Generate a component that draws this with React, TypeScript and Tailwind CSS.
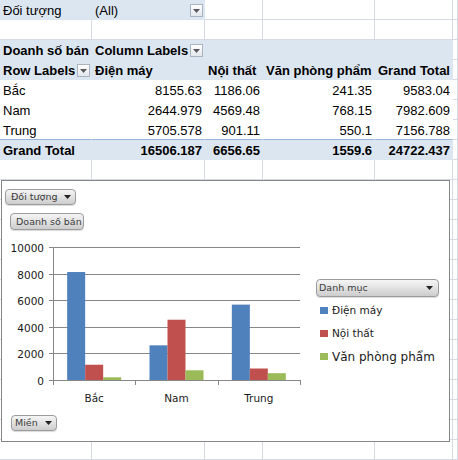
import React from "react";

const COLS = ["w-[92px]", "w-[113px]", "w-[58px]", "w-[112px]", "w-[78px]", "w-[5px]"];

type Kind = "grid" | "fill" | "plain" | "plainLine" | "total";

const KIND: Record<Kind, string> = {
  grid: "border-r border-b border-[#d5dae3] bg-white",
  fill: "border-r border-b border-[#dce6f1] bg-[#dce6f1]",
  plain: "border-r border-b border-white bg-white",
  plainLine: "border-r border-b border-r-white border-b-[#95b3d7] bg-white",
  total: "border-r border-b border-[#dce6f1] bg-[#dce6f1]",
};

type Cell = { k: Kind; t?: string; b?: boolean; r?: boolean; dd?: boolean };

const g: Cell = { k: "grid" };

function DropBtn() {
  return (
    <span className="ml-auto mb-[2px] mr-[1px] flex h-[13px] w-[13px] shrink-0 items-center justify-center border border-[#aab4c0] bg-linear-to-b from-white to-[#e3e8ee]">
      <svg width="7" height="4" viewBox="0 0 7 4">
        <path d="M0 0 L7 0 L3.5 4 Z" fill="#5a5a5a" />
      </svg>
    </span>
  );
}

const rows: Cell[][] = [
  [{ k: "fill", t: "Đối tượng" }, { k: "fill", t: "(All)", dd: true }, g, g, g, g],
  [g, g, g, g, g, g],
  [
    { k: "fill", t: "Doanh số bán", b: true },
    { k: "fill", t: "Column Labels", b: true, dd: true },
    { k: "fill" },
    { k: "fill" },
    { k: "fill" },
    g,
  ],
  [
    { k: "fill", t: "Row Labels", b: true, dd: true },
    { k: "fill", t: "Điện máy", b: true },
    { k: "fill", t: "Nội thất", b: true },
    { k: "fill", t: "Văn phòng phẩm", b: true },
    { k: "fill", t: "Grand Total", b: true },
    g,
  ],
  [
    { k: "plain", t: "Bắc" },
    { k: "plain", t: "8155.63", r: true },
    { k: "plain", t: "1186.06", r: true },
    { k: "plain", t: "241.35", r: true },
    { k: "plain", t: "9583.04", r: true },
    g,
  ],
  [
    { k: "plain", t: "Nam" },
    { k: "plain", t: "2644.979", r: true },
    { k: "plain", t: "4569.48", r: true },
    { k: "plain", t: "768.15", r: true },
    { k: "plain", t: "7982.609", r: true },
    g,
  ],
  [
    { k: "plainLine", t: "Trung" },
    { k: "plainLine", t: "5705.578", r: true },
    { k: "plainLine", t: "901.11", r: true },
    { k: "plainLine", t: "550.1", r: true },
    { k: "plainLine", t: "7156.788", r: true },
    g,
  ],
  [
    { k: "total", t: "Grand Total", b: true },
    { k: "total", t: "16506.187", b: true, r: true },
    { k: "total", t: "6656.65", b: true, r: true },
    { k: "total", t: "1559.6", b: true, r: true },
    { k: "total", t: "24722.437", b: true, r: true },
    g,
  ],
];

for (let i = 0; i < 15; i++) rows.push([g, g, g, g, g, g]);

function ChartBtn({ children, className }: { children: React.ReactNode; className: string }) {
  return (
    <div
      className={
        "flex items-center rounded-[4px] border border-[#9c9c9c] bg-linear-to-b from-[#f6f6f6] to-[#cdcdcd] text-[#3c3c3c] font-['DejaVu_Sans',sans-serif] text-[9.5px] leading-none shadow-[0_1px_1px_rgba(0,0,0,0.15)] " +
        className
      }
    >
      {children}
    </div>
  );
}

function Tri() {
  return (
    <svg width="7" height="4" viewBox="0 0 7 4" className="shrink-0">
      <path d="M0 0 L7 0 L3.5 4 Z" fill="#222" />
    </svg>
  );
}

const DATA = [
  [8155.63, 1186.06, 241.35],
  [2644.979, 4569.48, 768.15],
  [5705.578, 901.11, 550.1],
];
const CATS = ["Bắc", "Nam", "Trung"];
const COLORS = ["#4f81bd", "#c0504d", "#9bbb59"];

function Plot() {
  const Y0 = 148;
  const S = 133 / 10000;
  const X0 = 51;
  const X1 = 298;
  const catW = (X1 - X0) / 3;
  const bw = 18;
  const ticks = [0, 2000, 4000, 6000, 8000, 10000];
  return (
    <svg width="305" height="180" viewBox="0 0 305 180" className="shrink-0">
      {ticks.map((v) => {
        const y = Math.round(Y0 - v * S) + 0.5;
        return (
          <g key={v}>
            <line x1={X0 - 4} x2={X1} y1={y} y2={y} stroke="#878787" strokeWidth="1" />
            <text
              x={42}
              y={y + 4}
              textAnchor="end"
              fontFamily="DejaVu Sans, sans-serif"
              fontSize="10.5"
              fill="#1a1a1a"
            >
              {v}
            </text>
          </g>
        );
      })}
      {DATA.map((grp, i) =>
        grp.map((v, j) => {
          const h = v * S;
          const x = X0 + i * catW + (catW - 3 * bw) / 2 + j * bw;
          return <rect key={`${i}-${j}`} x={x} y={Y0 + 0.5 - h} width={bw} height={h} fill={COLORS[j]} />;
        })
      )}
      <line x1={X0 + 0.5} x2={X0 + 0.5} y1={15} y2={Y0 + 1} stroke="#878787" strokeWidth="1" />
      <line x1={X0} x2={X1} y1={Y0 + 0.5} y2={Y0 + 0.5} stroke="#878787" strokeWidth="1" />
      {[0, 1, 2, 3].map((k) => {
        const x = Math.round(X0 + k * catW) + 0.5;
        return <line key={k} x1={x} x2={x} y1={Y0} y2={Y0 + 5} stroke="#878787" strokeWidth="1" />;
      })}
      {CATS.map((c, i) => (
        <text
          key={c}
          x={X0 + i * catW + catW / 2}
          y={170}
          textAnchor="middle"
          fontFamily="DejaVu Sans, sans-serif"
          fontSize="10.5"
          fill="#1a1a1a"
        >
          {c}
        </text>
      ))}
    </svg>
  );
}

function LegendItem({ color, label, size }: { color: string; label: string; size: string }) {
  return (
    <div className="flex h-[23px] items-center pl-[4px]">
      <span className={"mr-[4px] h-[7px] w-[8px] " + color} />
      <span className={"font-['DejaVu_Sans',sans-serif] text-[#1a1a1a] " + size}>{label}</span>
    </div>
  );
}

export default function App() {
  return (
    <div className="relative h-[460px] w-[458px] overflow-hidden bg-white font-['Liberation_Sans',Arial,sans-serif] text-[13px] text-black">
      {rows.map((row, ri) => (
        <div key={ri} className="flex h-[20px]">
          {row.map((c, ci) => (
            <div
              key={ci}
              className={
                "flex h-[20px] shrink-0 items-end overflow-visible whitespace-nowrap leading-[15px] " +
                COLS[ci] +
                " " +
                KIND[c.k] +
                (c.r ? " justify-end pr-[2px]" : " pl-[3px]") +
                (c.b ? " font-bold" : "")
              }
            >
              {c.t && <span className="pb-[1px]">{c.t}</span>}
              {c.dd && <DropBtn />}
            </div>
          ))}
        </div>
      ))}

      <div className="absolute left-[1px] top-[180px] flex h-[262px] w-[449px] flex-col border border-[#868686] bg-white">
        <ChartBtn className="ml-[3px] mt-[8px] h-[16px] w-[71px] pl-[5px] pr-[4px]">
          <span>Đối tượng</span>
          <span className="ml-auto">
            <Tri />
          </span>
        </ChartBtn>
        <ChartBtn className="ml-[8px] mt-[8px] h-[17px] w-[74px] pl-[5px]">
          <span>Doanh số bán</span>
        </ChartBtn>
        <div className="mt-[2px] flex">
          <Plot />
          <div className="ml-[9px] mt-[47px] flex flex-col">
            <ChartBtn className="h-[18px] w-[123px] pl-[2px] pr-[5px]">
              <span>Danh mục</span>
              <span className="ml-auto">
                <Tri />
              </span>
            </ChartBtn>
            <div className="mt-[2px] flex flex-col">
              <LegendItem color="bg-[#4f81bd]" label="Điện máy" size="text-[10.5px]" />
              <LegendItem color="bg-[#c0504d]" label="Nội thất" size="text-[10.5px]" />
              <LegendItem color="bg-[#9bbb59]" label="Văn phòng phẩm" size="text-[12px]" />
            </div>
          </div>
        </div>
        <ChartBtn className="ml-[9px] mt-[3px] h-[16px] w-[46px] pl-[3px] pr-[4px]">
          <span>Miền</span>
          <span className="ml-auto">
            <Tri />
          </span>
        </ChartBtn>
      </div>
    </div>
  );
}
